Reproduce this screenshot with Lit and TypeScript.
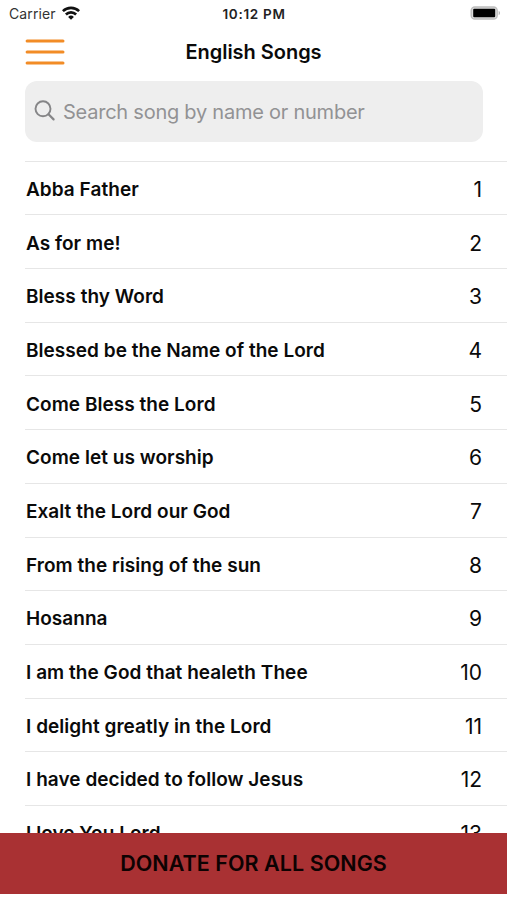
import { LitElement, html, css } from "lit";
import { customElement } from "lit/decorators.js";

const SONGS = [
  "Abba Father",
  "As for me!",
  "Bless thy Word",
  "Blessed be the Name of the Lord",
  "Come Bless the Lord",
  "Come let us worship",
  "Exalt the Lord our God",
  "From the rising of the sun",
  "Hosanna",
  "I am the God that healeth Thee",
  "I delight greatly in the Lord",
  "I have decided to follow Jesus",
  "I love You Lord",
];

@customElement("app-root")
class AppRoot extends LitElement {
  static styles = css`
    :host { display: flex; flex-direction: column; height: 900px; overflow: hidden; background: #fff; color: #0a0a0a; font-family: Inter, "Liberation Sans", sans-serif; }
    svg { display: block; flex: none; }
    .status { display: grid; grid-template-columns: 1fr auto 1fr; align-items: center; height: 27px; padding: 0 6px 0 9px; flex: none; }
    .carrier { display: flex; align-items: center; gap: 6px; font-size: 14px; letter-spacing: 0.1px; color: #333; }
    .carrier svg { margin-top: -2px; }
    .time { font-weight: 600; font-size: 13.5px; letter-spacing: 0.7px; color: #222; margin-right: 2px; }
    .battery { justify-self: end; margin-top: -1px; }
    .nav { display: grid; grid-template-columns: 40px 1fr 40px; align-items: center; height: 50px; padding: 0 25px; flex: none; }
    .title { text-align: center; font-weight: 600; font-size: 20px; letter-spacing: -0.03px; }
    .search { flex: none; display: flex; align-items: center; gap: 7px; margin: 4px 24px 18.7px 25px; height: 61px; border-radius: 12px; background: #eee; color: #929294; padding-left: 9px; box-sizing: border-box; font-size: 20px; letter-spacing: -0.24px; }
    .search svg { margin-top: -1px; }
    .list { flex: 1; min-height: 0; overflow: hidden; padding-left: 25px; }
    .row { box-sizing: border-box; height: 53.7px; border-top: 1px solid #e6e6e6; padding: 2.6px 25px 0 1px; display: flex; justify-content: space-between; align-items: center; }
    .name { font-weight: 600; font-size: 19px; letter-spacing: 0.04px; white-space: nowrap; }
    .num { font-size: 21px; }
    .donate { flex: none; height: 61px; margin-bottom: 6px; padding-bottom: 1px; box-sizing: border-box; background: #a93133; color: #0d0202; display: flex; align-items: center; justify-content: center; font-weight: 600; font-size: 21.5px; letter-spacing: 0.05px; }
  `;

  render() {
    return html`
      <div class="status">
        <div class="carrier">
          <span>Carrier</span>
          <svg width="18" height="14" viewBox="0 0 18 14" fill="none" stroke="#111" stroke-width="2.6">
            <path d="M0.9 5.2a11.5 11.5 0 0 1 16.2 0" />
            <path d="M3.9 8.5a7.2 7.2 0 0 1 10.2 0" />
            <path d="M9 13.8 6.1 10.9a4.1 4.1 0 0 1 5.8 0z" fill="#111" stroke="none" />
          </svg>
        </div>
        <span class="time">10:12 PM</span>
        <svg class="battery" width="31" height="14" viewBox="0 0 31 14">
          <rect x="1.2" y="1" width="26" height="12" rx="3.6" fill="#ddd" stroke="#bdbdbd" stroke-width="1.4" />
          <rect x="3.2" y="2.7" width="22" height="8.6" rx="1" fill="#000" />
          <path d="M28.7 4.8a2.5 2.5 0 0 1 0 4.4z" fill="#b0b0b0" />
        </svg>
      </div>
      <div class="nav">
        <svg width="40" height="28" viewBox="0 0 40 28" stroke="#f28c26" stroke-width="3" stroke-linecap="round">
          <path d="M2.1 2.9H38M2.1 13.9H38M2.1 24.9H38" />
        </svg>
        <span class="title">English Songs</span>
      </div>
      <div class="search">
        <svg width="22" height="22" viewBox="0 0 22 22" fill="none" stroke="#858587" stroke-width="1.9" stroke-linecap="round">
          <circle cx="9" cy="8.8" r="7.5" />
          <path d="M14.5 14.3 19.6 19.4" stroke-width="2.2" />
        </svg>
        <span>Search song by name or number</span>
      </div>
      <div class="list">
        ${SONGS.map((song, i) => html`<div class="row"><span class="name">${song}</span><span class="num">${i + 1}</span></div>`)}
      </div>
      <div class="donate"><span>DONATE FOR ALL SONGS</span></div>
    `;
  }
}
